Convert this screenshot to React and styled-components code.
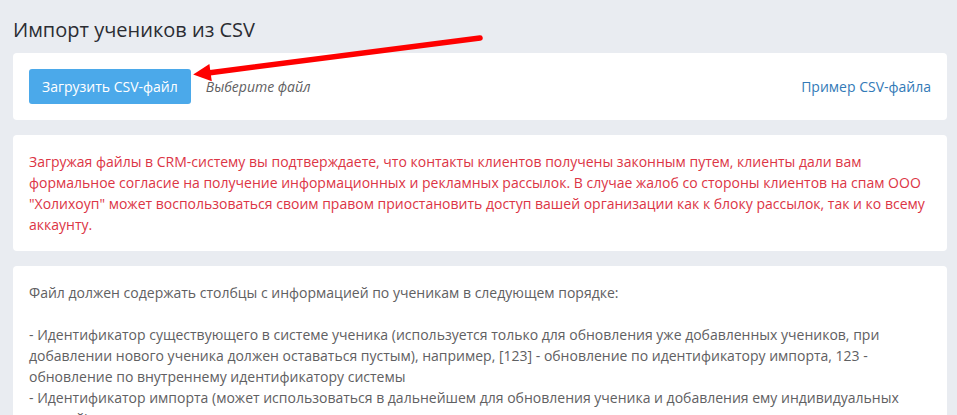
import React, { useState } from "react";
import styled, { createGlobalStyle } from "styled-components";

const colors = {
  page: "#e9ecf1",
  card: "#ffffff",
  title: "#2b2d33",
  text: "#5f6062",
  button: "#4ba9ea",
  buttonHover: "#3796dc",
  link: "#337ab7",
  danger: "#dc3545",
  arrow: "#fe0000"
};

const GlobalStyle = createGlobalStyle`
  * {
    box-sizing: border-box;
  }
  html {
    scrollbar-width: none;
  }
  body {
    margin: 0;
    background: ${colors.page};
    color: ${colors.text};
    font-family: "Open Sans", "Noto Sans", sans-serif;
    font-size: 14px;
    line-height: 21px;
  }
`;

const Page = styled.main`
  position: relative;
  display: flex;
  flex-direction: column;
  gap: 15px;
  padding: 0 10px 15px 13px;
`;
const Title = styled.h1`
  margin: 0;
  padding-top: 22px;
  color: ${colors.title};
  font-size: 20px;
  font-weight: 400;
  line-height: 16px;
`;
const Card = styled.section`
  padding: 16px;
  background: ${colors.card};
  border-radius: 4px;
`;
const UploadRow = styled.div`
  display: flex;
  align-items: center;
  gap: 15px;
`;
const UploadBtn = styled.button`
  height: 35px;
  padding: 0 13px;
  background: ${colors.button};
  color: #fff;
  border: none;
  border-radius: 3px;
  font: inherit;
  cursor: pointer;
  &:hover { background: ${colors.buttonHover}; }
`;
const FileInput = styled.input`
  display: none;
`;
const FileName = styled.em`
  flex: 1;
`;
const SampleLink = styled.a`
  color: ${colors.link};
  text-decoration: none;
  &:hover { text-decoration: underline; }
`;
const Text = styled.p`
  margin: 0;
  color: ${({ $danger }) => $danger ? colors.danger : colors.text};
`;
const Columns = styled.ul`
  list-style: none;
  margin: 21px 0 0;
  padding: 0;
`;
// Points at the upload button, lies over both the header and the first card
const Arrow = styled.svg`
  position: absolute;
  top: 30px;
  left: 188px;
  width: 300px;
  height: 56px;
  pointer-events: none;
`;

const columns = [
  "Идентификатор существующего в системе ученика (используется только для обновления уже добавленных учеников, при добавлении нового ученика должен оставаться пустым), например, [123] - обновление по идентификатору импорта, 123 - обновление по внутреннему идентификатору системы",
  "Идентификатор импорта (может использоваться в дальнейшем для обновления ученика и добавления ему индивидуальных занятий)"
];

export default function App() {
  const [fileName, setFileName] = useState("");
  const fileRef = React.useRef(null);

  return (
    <>
      <GlobalStyle />
      <Page>
        <Title>Импорт учеников из CSV</Title>
        <Card>
          <UploadRow>
            <UploadBtn type="button" onClick={() => fileRef.current.click()}>
              Загрузить CSV-файл
            </UploadBtn>
            <FileInput
              ref={fileRef}
              type="file"
              accept=".csv"
              aria-label="Загрузить CSV-файл"
              onChange={e => setFileName(e.target.files[0]?.name || "")}
            />
            <FileName>{fileName || "Выберите файл"}</FileName>
            <SampleLink href="#sample">Пример CSV-файла</SampleLink>
          </UploadRow>
        </Card>
        <Card>
          <Text $danger>
            Загружая файлы в CRM-систему вы подтверждаете, что контакты клиентов получены законным путем, клиенты дали вам формальное согласие на получение информационных и рекламных рассылок. В случае жалоб со стороны клиентов на спам ООО "Холихоуп" может воспользоваться своим правом приостановить доступ вашей организации как к блоку рассылок, так и ко всему аккаунту.
          </Text>
        </Card>
        <Card>
          <Text>Файл должен содержать столбцы с информацией по ученикам в следующем порядке:</Text>
          <Columns>
            {columns.map(column => (
              <li key={column}>{`- ${column}`}</li>
            ))}
          </Columns>
        </Card>
        <Arrow viewBox="0 0 300 56" aria-hidden="true">
          <path d="M292 8L22 42.7" stroke={colors.arrow} strokeWidth="5.6" strokeLinecap="round" />
          <path d="M5.2 44.6L21.4 34L23.8 51.2Z" fill={colors.arrow} />
        </Arrow>
      </Page>
    </>
  );
}
